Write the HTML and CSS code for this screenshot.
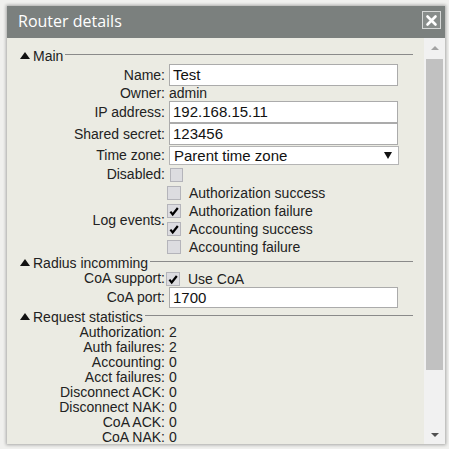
FILE: index.html
```html
<!DOCTYPE html>
<html>
<head>
<meta charset="utf-8">
<link rel="stylesheet" href="styles.css">
</head>
<body>
<div class="window">
  <div class="titlebar">
    <span class="title">Router details</span>
    <span class="close"><svg width="13" height="13" viewBox="0 0 13 13"><path d="M2.5 2.5 L10.5 10.5 M10.5 2.5 L2.5 10.5" stroke="#fff" stroke-width="2.6" stroke-linecap="round"/></svg></span>
  </div>
  <div class="body">
    <div class="content">
      <div class="legend l-main"><span class="tri"></span><span class="legend-text">Main</span><span class="legend-line"></span></div>
      <div class="row r22"><span class="lbl">Name:</span><span class="input">Test</span></div>
      <div class="row r15"><span class="lbl">Owner:</span><span class="val">admin</span></div>
      <div class="row r22"><span class="lbl">IP address:</span><span class="input">192.168.15.11</span></div>
      <div class="row r22"><span class="lbl">Shared secret:</span><span class="input">123456</span></div>
      <div class="row r20"><span class="lbl">Time zone:</span><span class="select"><span>Parent time zone</span><span class="arrow"></span></span></div>
      <div class="row r19"><span class="lbl">Disabled:</span><span class="cb cb-solo"></span></div>
      <div class="row"><span class="lbl">Log events:</span>
        <div class="checks">
          <div class="check"><span class="cb"></span><span>Authorization success</span></div>
          <div class="check"><span class="cb on"><svg width="12" height="12" viewBox="0 0 12 12"><path d="M2.4 6.6 L4.7 9.4 L9.8 3" fill="none" stroke="#000" stroke-width="2.2"/></svg></span><span>Authorization failure</span></div>
          <div class="check"><span class="cb on"><svg width="12" height="12" viewBox="0 0 12 12"><path d="M2.4 6.6 L4.7 9.4 L9.8 3" fill="none" stroke="#000" stroke-width="2.2"/></svg></span><span>Accounting success</span></div>
          <div class="check"><span class="cb"></span><span>Accounting failure</span></div>
        </div>
      </div>
      <div class="legend l-radius"><span class="tri"></span><span class="legend-text">Radius incomming</span><span class="legend-line"></span></div>
      <div class="row r17"><span class="lbl">CoA support:</span><div class="check"><span class="cb on"><svg width="12" height="12" viewBox="0 0 12 12"><path d="M2.4 6.6 L4.7 9.4 L9.8 3" fill="none" stroke="#000" stroke-width="2.2"/></svg></span><span>Use CoA</span></div></div>
      <div class="row r21"><span class="lbl">CoA port:</span><span class="input">1700</span></div>
      <div class="legend l-stats"><span class="tri"></span><span class="legend-text">Request statistics</span><span class="legend-line"></span></div>
      <div class="row r15"><span class="lbl">Authorization:</span><span class="val">2</span></div>
      <div class="row r15"><span class="lbl">Auth failures:</span><span class="val">2</span></div>
      <div class="row r15"><span class="lbl">Accounting:</span><span class="val">0</span></div>
      <div class="row r15"><span class="lbl">Acct failures:</span><span class="val">0</span></div>
      <div class="row r15"><span class="lbl">Disconnect ACK:</span><span class="val">0</span></div>
      <div class="row r15"><span class="lbl">Disconnect NAK:</span><span class="val">0</span></div>
      <div class="row r15"><span class="lbl">CoA ACK:</span><span class="val">0</span></div>
      <div class="row r15"><span class="lbl">CoA NAK:</span><span class="val">0</span></div>
    </div>
    <div class="scrollbar">
      <div class="sb-btn"><span class="sb-up"></span></div>
      <div class="sb-track"><div class="sb-thumb"></div></div>
      <div class="sb-btn"><span class="sb-down"></span></div>
    </div>
  </div>
</div>
</body>
</html>
```
FILE: styles.css
```css
html, body {
  margin: 0;
  padding: 0;
}
body {
  width: 449px;
  height: 449px;
  background: #f0f0ee;
  overflow: hidden;
  font-family: "Liberation Sans", Arial, sans-serif;
  font-size: 14px;
  color: #222;
}
.window {
  margin: 6px 0 0 7px;
  width: 438px;
  height: 438px;
  background: #ebebe3;
  box-shadow: 0 0 3px 1px rgba(0,0,0,0.3);
  display: flex;
  flex-direction: column;
}
.titlebar {
  height: 32px;
  background: #7b807e;
  display: flex;
  align-items: center;
  justify-content: space-between;
  padding: 0 4px 0 11px;
  flex: none;
}
.title {
  font-family: "Open Sans", sans-serif;
  font-size: 16px;
  color: #fff;
  margin-top: -2px;
}
.close {
  width: 17px;
  height: 16px;
  border: 1px solid #d6d8d7;
  background: #888d8b;
  display: flex;
  align-items: center;
  justify-content: center;
  margin-top: -4px;
}
.body {
  flex: 1;
  display: flex;
  min-height: 0;
}
.content {
  flex: 1;
  padding: 9px 11px 0 0;
  height: 406px;
  overflow: visible;
}
.legend {
  display: flex;
  align-items: center;
  padding-left: 13px;
}
.l-main { height: 17px; }
.l-radius { height: 14px; }
.l-stats { height: 17px; }
.tri {
  width: 0;
  height: 0;
  border-left: 5px solid transparent;
  border-right: 5px solid transparent;
  border-bottom: 7px solid #111;
  margin-right: 3px;
  margin-top: -1px;
}
.legend-text {
  line-height: 16px;
}
.legend-line {
  flex: 1;
  height: 1px;
  background: #8a8a8a;
  margin-left: 2px;
  margin-top: -3px;
}
.row {
  display: flex;
  align-items: center;
}
.r15 { height: 15px; }
.r17 { height: 17px; }
.r19 { height: 19px; }
.r20 { height: 20px; }
.r21 { height: 21px; }
.r22 { height: 22px; }
.lbl {
  width: 158px;
  text-align: right;
  margin-right: 4px;
  line-height: 15px;
  flex: none;
}
.val {
  line-height: 15px;
}
.input {
  box-sizing: border-box;
  width: 229px;
  height: 22px;
  background: #fff;
  border: 1px solid #ababab;
  padding: 0 3px;
  line-height: 20px;
  font-size: 15px;
  color: #111;
}
.r21 .input { height: 21px; line-height: 19px; }
.select {
  box-sizing: border-box;
  width: 230px;
  height: 19px;
  margin-top: 1px;
  background: #fff;
  border: 1px solid #b5b5b5;
  display: flex;
  align-items: center;
  justify-content: space-between;
  padding: 0 6px 0 4px;
  font-size: 15px;
  color: #111;
}
.arrow {
  width: 0;
  height: 0;
  border-left: 4px solid transparent;
  border-right: 4px solid transparent;
  border-top: 7px solid #111;
}
.cb {
  box-sizing: border-box;
  width: 14px;
  height: 14px;
  background: #dcdce0;
  border: 1px solid #b4b4ba;
  display: flex;
  align-items: center;
  justify-content: center;
  flex: none;
}
.cb-solo {
  margin-left: 1px;
  width: 13px;
}
.checks {
  display: flex;
  flex-direction: column;
  margin-left: -2px;
}
.check {
  height: 18px;
  display: flex;
  align-items: center;
  gap: 8px;
}
.r17 .check {
  margin-left: -3px;
  height: 17px;
}
.scrollbar {
  width: 19px;
  background: #f1f1f1;
  display: flex;
  flex-direction: column;
  padding-right: 2px;
  flex: none;
}
.sb-btn {
  height: 19px;
  display: flex;
  align-items: center;
  justify-content: center;
  padding-left: 2px;
}
.sb-up {
  width: 0;
  height: 0;
  border-left: 4px solid transparent;
  border-right: 4px solid transparent;
  border-bottom: 4px solid #a3a3a3;
}
.sb-down {
  width: 0;
  height: 0;
  border-left: 4px solid transparent;
  border-right: 4px solid transparent;
  border-top: 4px solid #505050;
}
.sb-track {
  flex: 1;
  padding: 2px 0 0 2px;
}
.sb-thumb {
  height: 311px;
  background: #c1c1c1;
}
```
